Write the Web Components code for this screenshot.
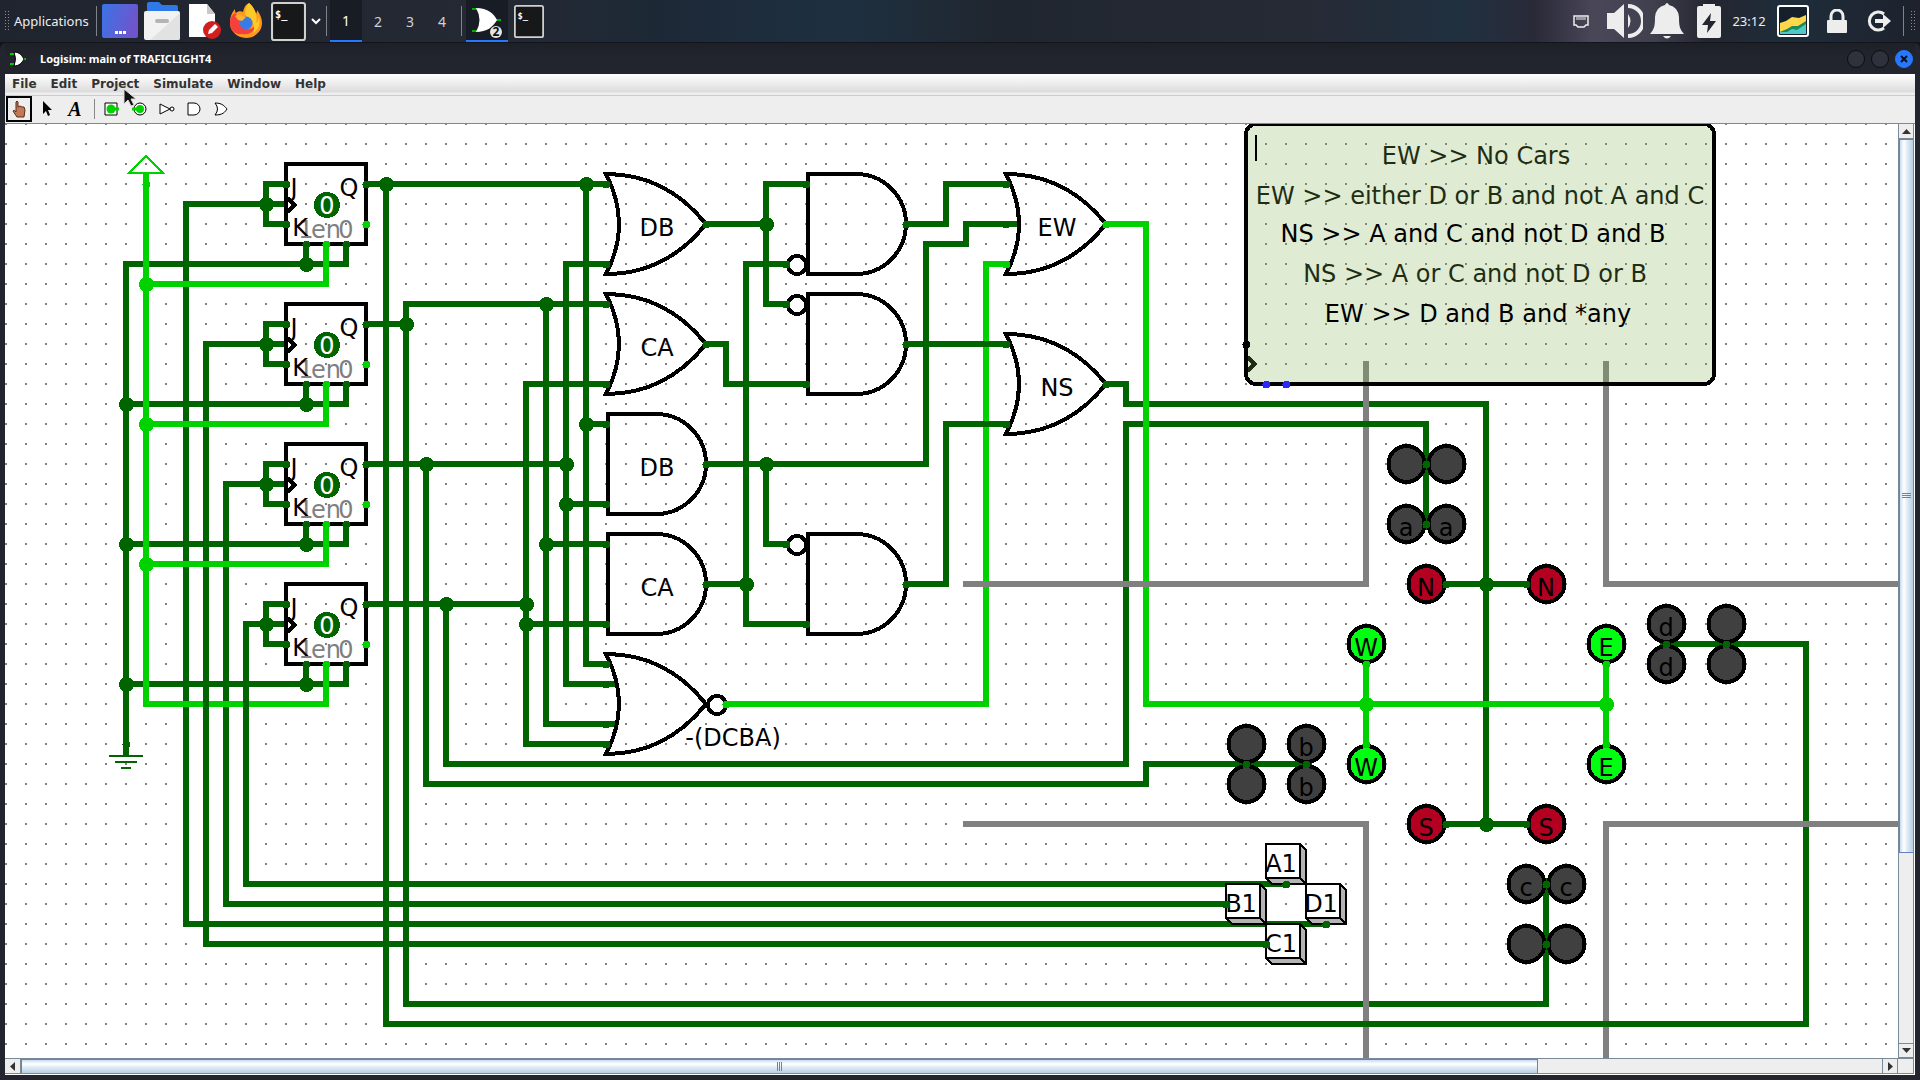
<!DOCTYPE html>
<html lang="en">
<head>
<meta charset="utf-8">
<title>Logisim: main of TRAFICLIGHT4</title>
<style>
html,body{margin:0;height:100%;overflow:hidden;background:#12151d}
body{display:flex;flex-direction:column}
app-window{flex:1;min-height:0}
</style>
</head>
<body>
<desk-panel></desk-panel>
<app-window heading="Logisim: main of TRAFICLIGHT4">
  <menu-bar slot="menu"></menu-bar>
  <tool-bar slot="tools"></tool-bar>
  <scroll-view><circuit-canvas></circuit-canvas></scroll-view>
</app-window>
<mouse-pointer></mouse-pointer>

<script>
function define(name, html, setup) {
  const template = document.createElement('template');
  template.innerHTML = html;
  customElements.define(name, class extends HTMLElement {
    constructor() {
      super();
      this.attachShadow({mode: 'open'}).appendChild(template.content.cloneNode(true));
    }
    connectedCallback() { if (setup) setup(this, this.shadowRoot); }
  });
}

/* ---------- desktop panel ---------- */
const terminalIcon = (w, h) => `<svg width="${w}" height="${h}" viewBox="0 0 34 38" preserveAspectRatio="none"><rect x="1" y="1" width="32" height="36" rx="2" fill="#171819" stroke="#d0d0cc" stroke-width="2"/><text x="4" y="16" font-family="DejaVu Sans Mono" font-weight="bold" font-size="10" fill="#fff">$_</text></svg>`;

define('desk-panel', `
<style>
:host{display:flex;align-items:center;height:42px;flex:none;color:#eee;font:13px "Noto Sans","Open Sans",sans-serif;
 background:linear-gradient(90deg,#20242e 0,#252933 25%,#1d2836 34%,#1e3040 44%,#20262f 52%,#262a35 68%,#20303f 76%,#2a2a38 80%,#4a4758 83%,#41404f 86%,#23262f 89%,#1f2d3b 93%,#1d222c 100%)}
button{all:unset;box-sizing:border-box;display:flex;align-items:center;justify-content:center;height:42px}
svg{display:block}
.handle{width:6px;height:22px;margin:0 4px;background:radial-gradient(circle,#8b8e94 1px,transparent 1px) 0 0/3px 3px}
.sep{width:1px;height:30px;background:#80838a}
.app{width:82px;justify-content:flex-start}
.launch{width:42px}
.ws{width:32px;font-size:14px;color:#cfd2d6}
.active{background:#181c24;border-bottom:2px solid #2777ff;color:#fff}
.chev{width:14px}
.task{width:42px}
.grow{flex:1}
</style>
<div class="handle"></div>
<button class="app">Applications</button>
<div class="sep" style="margin-right:2px"></div>
<button class="launch" aria-label="Show desktop"><svg width="36" height="34"><defs><linearGradient id="d" x2="1" y2="0.3"><stop stop-color="#3a74e6"/><stop offset="1" stop-color="#6f55cc"/></linearGradient></defs><rect width="36" height="34" rx="2" fill="url(#d)"/><path d="M13 27h3v3h-3zM17 27h3v3h-3zM21 27h3v3h-3z" fill="#fff"/></svg></button>
<button class="launch" aria-label="Files"><svg width="36" height="40"><path d="M3 3q0-2 2-2h10l3 3h14q2 0 2 2v10H3z" fill="#2f78e8"/><rect y="10" width="36" height="29" rx="2" fill="#f2f2f2"/><path d="M36 12v25q0 2-2 2H6z" fill="#e2e2e2"/><rect x="11" y="18" width="14" height="4" rx="2" fill="#b4b4b4"/></svg></button>
<button class="launch" aria-label="Text editor"><svg width="34" height="42"><path d="M2 4h18l8 10v23H2z" fill="#fff"/><path d="M20 4l8 10h-8z" fill="#c9c9c9"/><circle cx="25" cy="30" r="9" fill="#d41e1e"/><path d="M21 34l1-4 6-6 3 3-6 6z" fill="#fff"/></svg></button>
<button class="launch" aria-label="Firefox"><svg width="34" height="36" viewBox="0 0 34 36"><path d="M20 0c6 5 6 9 7 11 1-2 1-3 1-4 3 4 5 8 5 13a16 15 0 0 1-32 0C1 15 2 11 6 6c0 2 0 3 1 4 2-2 5-2 7-1 1-5 3-8 6-9z" fill="#ff9a1f"/><path d="M1 20c0-5 2-8 5-10l4 4 4 0-3 4c-2 6 7 12 15 5-1 8-9 9-13 8C6 32 1 27 1 20z" fill="#f5403d"/><path d="M20 0c6 5 9 13 7 20 2-1 3-4 2-7 3 6 1 14-5 17 3-7-1-14-6-16-3-3-2-10 2-14z" fill="#ffc928"/><circle cx="17" cy="20" r="6.500" fill="#3a7bea"/><path d="M6 13c3-2 6-1 8 0l3 1-4 4-4-1z" fill="#ffb22a"/></svg></button>
<button class="launch" aria-label="Terminal">${terminalIcon(35, 39)}</button>
<button class="chev" aria-label="More"><svg width="10" height="8"><path d="M1 2l4 4 4-4" fill="none" stroke="#fff" stroke-width="2"/></svg></button>
<div class="sep" style="margin:0 3px"></div>
<button class="ws active">1</button><button class="ws">2</button><button class="ws">3</button><button class="ws">4</button>
<div class="sep" style="margin:0 4px 0 3px"></div>
<button class="task active" aria-label="Logisim"><svg width="32" height="38"><path d="M1 8h5M1 30h5M25 19h5" stroke="#0a0" stroke-width="2"/><path d="M5 7c12 0 18 6 21 12-4 7-10 12-21 12q7-12 0-24z" fill="#fff"/><circle cx="25" cy="31" r="6" fill="#e6e6e0"/><text x="25" y="35" text-anchor="middle" font-family="Noto Sans" font-size="12" font-weight="bold" fill="#111">2</text></svg></button>
<button class="task" aria-label="Terminal task">${terminalIcon(30, 33)}</button>
<div class="grow"></div>
<button style="width:44px" aria-label="Network"><svg width="16" height="14"><path d="M1 2h14v9h-2l-2 2H5l-2-2H1z" fill="none" stroke="#eee" stroke-width="1.500"/><path d="M4 3v3M6 3v3M8 3v3M10 3v3M12 3v3" stroke="#eee"/></svg></button>
<button style="width:44px" aria-label="Volume"><svg width="36" height="34"><path d="M0 9h7L17 0v34L7 25H0z" fill="#ededed"/><path d="M21 10q5 7 0 14z" fill="#ededed"/><path d="M21 2a15 15 0 0 1 0 30" fill="none" stroke="#ededed" stroke-width="4"/></svg></button>
<button style="width:40px" aria-label="Notifications"><svg width="34" height="36"><path d="M15 2q2-4 4 0 9 2 10 12c0 10 1 12 5 17H0c4-5 5-7 5-17Q6 4 15 2zM13 33h8q-4 5-8 0z" fill="#ededed"/></svg></button>
<button style="width:44px" aria-label="Power"><svg width="24" height="34"><path d="M6 0h12v2h4q2 0 2 2v28q0 2-2 2H2q-2 0-2-2V4q0-2 2-2h4z" fill="#ededed"/><path d="M14 9L5 21h6l-1 8 9-12h-6z" fill="#23262f"/></svg></button>
<button style="width:36px;white-space:nowrap">23:12</button>
<button style="width:52px" aria-label="System load"><svg width="32" height="32"><rect x="1" y="1" width="30" height="30" rx="2" fill="#15202c" stroke="#fff" stroke-width="2"/><path d="M3 18l6-2 6-4 7 1 7-3v8l-9 4-7 2-10 4z" fill="#ffd74a"/><path d="M3 27l7-2 5-3 5 1 9-6v12H3z" fill="#4cc9c9"/><path d="M3 27l7-3 5-3 6 0 8-5v3l-9 6-5-1-5 3z" fill="#1e8a5a"/></svg></button>
<button style="width:36px" aria-label="Lock"><svg width="22" height="24"><path d="M5 11V7a6 6 0 0 1 12 0v4" fill="none" stroke="#ededed" stroke-width="3"/><rect x="1" y="11" width="20" height="13" rx="1" fill="#ededed"/></svg></button>
<button style="width:48px" aria-label="Log out"><svg width="24" height="22"><path d="M17 4a9 9 0 1 0 0 14" fill="none" stroke="#ededed" stroke-width="3"/><path d="M8 9h8V4l8 7-8 7v-5H8z" fill="#ededed"/></svg></button>
<div class="sep"></div>
<div class="handle" style="margin:0 4px 0 6px"></div>
`);

/* ---------- window frame ---------- */
define('app-window', `
<style>
:host{display:flex;flex-direction:column;box-sizing:border-box;margin-top:1px;padding:0 5px 5px;background:#23252e;border-radius:6px 6px 0 0}
header{display:flex;align-items:center;gap:6px;height:31px;flex:none;padding:0 2px 0 5px;background:linear-gradient(#1e2028,#23252e 50%);color:#fff}
h1{flex:1;margin:0 0 0 8px;font:bold 11px "Noto Sans","Open Sans",sans-serif}
header button{all:unset;box-sizing:border-box;width:18px;height:18px;border-radius:50%;background:#2f323d;border:1px solid #0c0d11}
header button.close{background:#2777ff;border-color:#2777ff;display:flex;align-items:center;justify-content:center}
main{flex:1;min-height:0;display:flex;flex-direction:column;background:#fff}
::slotted(scroll-view){flex:1;min-height:0}
</style>
<header>
<svg width="16" height="16"><path d="M0 3h4M0 13h4M13 8h3" stroke="#0c0" stroke-width="2"/><path d="M4 1c6 0 8 4 10 7-2 4-5 7-10 7q3-7 0-14z" fill="#fff" stroke="#000"/></svg>
<h1></h1>
<button aria-label="Minimize"></button><button aria-label="Maximize"></button><button class="close" aria-label="Close"><svg width="8" height="8"><path d="M1 1l6 6M7 1l-6 6" stroke="#0b0f1a" stroke-width="2"/></svg></button>
</header>
<main><slot name="menu"></slot><slot name="tools"></slot><slot></slot></main>
`, (el, root) => { root.querySelector('h1').textContent = el.getAttribute('heading'); });

define('menu-bar', `
<style>
:host{display:flex;height:20px;flex:none;padding-bottom:1px;background:linear-gradient(#fff,#dcdcdc 18px,#eee 19px);border-bottom:1px solid #ccc;font:bold 12px "DejaVu Sans",sans-serif}
button{all:unset;padding:0 7px;line-height:19px;color:#333}
button:first-child{padding:0 6px 0 4px}
</style>
<button>File</button><button>Edit</button><button>Project</button><button>Simulate</button><button>Window</button><button>Help</button>
`);

define('tool-bar', `
<style>
:host{display:flex;align-items:center;height:26px;flex:none;background:#eee;padding:0 1px 1px;border-bottom:1px solid #7a8a99}
button{all:unset;box-sizing:border-box;width:28px;height:26px;display:flex;align-items:center;justify-content:center}
.on{width:26px;margin-right:1px;border:2px solid #000}
i{width:1px;height:20px;background:#888;margin:0 2px 0 5px}
</style>
<button class="on" aria-label="Poke"><svg width="14" height="18" viewBox="0 0 14 18"><path d="M4 10V2q1-2 2 0v5l2-1 2 1 2 0 1 3-1 7H5L1 11q1-2 3 1z" fill="#c07a58" stroke="#5a2b17"/></svg></button>
<button aria-label="Select"><svg width="10" height="16"><path d="M1 0v13l3-3 2 5 2-1-2-5h4z"/></svg></button>
<button aria-label="Text" style="font:italic bold 20px/26px 'Liberation Serif',serif">A</button>
<i></i>
<button aria-label="Input pin"><svg width="16" height="14"><path d="M2 1h12v12h-12z" fill="#fff" stroke="#000"/><circle cx="8" cy="7" r="4.500" fill="#00d200"/><path d="M12 7h4" stroke="#00d200" stroke-width="3"/></svg></button>
<button aria-label="Output pin"><svg width="16" height="14"><circle cx="9" cy="7" r="6" fill="#fff" stroke="#000"/><circle cx="9" cy="7" r="4" fill="#00d200"/><path d="M1 7h5" stroke="#00d200" stroke-width="3"/></svg></button>
<button aria-label="NOT gate"><svg width="16" height="14"><path d="M1 2v10l10-5z" fill="#fff" stroke="#000"/><circle cx="13" cy="7" r="2" fill="#fff" stroke="#000"/></svg></button>
<button aria-label="AND gate" style="width:26px"><svg width="14" height="14"><path d="M1 1h6a6 6 0 0 1 0 12H1z" fill="#fff" stroke="#000"/></svg></button>
<button aria-label="OR gate"><svg width="16" height="14"><path d="M2 1c8 0 10 4 12 6-2 3-4 6-12 6q5-6 0-12z" fill="#fff" stroke="#000"/></svg></button>
`);

/* ---------- scrolling area ---------- */
define('scroll-view', `
<style>
:host{display:grid;grid-template:minmax(0,1fr) 16px / minmax(0,1fr) 16px;margin:0 1px 1px 0;background:#eee}
::slotted(*){min-width:0;min-height:0}
.v,.h{display:flex;background:#eee;box-sizing:border-box}
.v{flex-direction:column;border:1px solid #7a8a99;border-width:0 1px}
.h{border:1px solid #7a8a99;border-width:1px 0}
button{all:unset;box-sizing:border-box;flex:none;display:flex;align-items:center;justify-content:center;background:#eee}
.v button{height:15px;border-bottom:1px solid #7a8a99}.h button{width:16px;border-right:1px solid #7a8a99}
.v button:last-child{border:solid #7a8a99;border-width:1px 0}
.h button:last-child{border:solid #7a8a99;border-width:0 1px}
.thumb{box-sizing:border-box;display:flex;align-items:center;justify-content:center}
.v .thumb{flex:713;border:solid #6382bf;border-width:1px 0 1px 1px;background:linear-gradient(90deg,#c8ddf2,#fff 30%,#dce8f3 60%,#b8cfe5)}
.h .thumb{flex:1517;border:solid #6382bf;border-width:1px 1px 0;background:linear-gradient(#c8ddf2,#fff 30%,#dce8f3 60%,#b8cfe5)}
.v s{flex:190}.h s{flex:344}
.corner{border:solid #7a8a99;border-width:1px 1px 1px 0}
</style>
<slot></slot>
<div class="v"><button aria-label="Up"><svg width="9" height="5"><path d="M0 5L4.500 0 9 5z" fill="#333"/></svg></button><div class="thumb"><svg width="9" height="6" shape-rendering="crispEdges"><path d="M0 .5h9M0 2.500h9M0 4.500h9" stroke="#6382bf"/></svg></div><s></s><button aria-label="Down"><svg width="9" height="5"><path d="M0 0l4.500 5L9 0z" fill="#333"/></svg></button></div>
<div class="h"><button aria-label="Left"><svg width="5" height="9"><path d="M5 0L0 4.500 5 9z" fill="#333"/></svg></button><div class="thumb"><svg width="6" height="9" shape-rendering="crispEdges"><path d="M.5 0v9M2.500 0v9M4.500 0v9" stroke="#6382bf"/></svg></div><s></s><button aria-label="Right"><svg width="5" height="9"><path d="M0 0l5 4.500L0 9z" fill="#333"/></svg></button></div>
<div class="corner"></div>
`);

/* ---------- circuit ---------- */
const G = 20, DARK = '#006400', LIT = '#00d200';
const wires = (color, list) => list.map(p => {
  const pts = p.map(v => v * G);
  let d = '';
  for (let i = 0; i < pts.length; i += 2) d += (i ? 'L' : 'M') + pts[i] + ' ' + pts[i + 1];
  return `<path d="${d}" fill="none" stroke="${color}" stroke-width="6"/>`;
}).join('');
const dots = (color, r, list) => list.map(([x, y]) => `<circle cx="${x * G + .5}" cy="${y * G + .5}" r="${r}" fill="${color}"/>`).join('');
const label = (x, y, t, extra = '') => t ? `<text x="${x}" y="${y}" text-anchor="middle" ${extra}>${t}</text>` : '';

const andGate = (X, Y, t) => { const x = X * G, y = Y * G;
  return `<path class="s" d="M${x - 50} ${y - 50}H${x - 98}V${y + 50}H${x - 50}A50 50 0 0 0 ${x - 50} ${y - 50}"/>` + label(x - 49, y + 12, t); };
const orGate = (X, Y, t) => { const x = X * G, y = Y * G;
  return `<path class="s" d="M${x} ${y}q-40 -50 -100 -50q26 50 0 100q60 0 100 -50z"/>` + label(x - 49, y + 12, t); };
const bubble = (X, Y) => `<circle class="s" cx="${X * G + 11}" cy="${Y * G + 1}" r="9"/>`;

function flipFlop(Y, clockX) {
  const y = Y * G;
  return wires(DARK, [[14, Y + 1, 13, Y + 1, 13, Y + 3, 14, Y + 3], [clockX, Y + 2, 14, Y + 2], [15, Y + 4, 15, Y + 5], [17, Y + 4, 17, Y + 5, 6, Y + 5]])
    + dots(DARK, 7.5, [[13, Y + 2], [15, Y + 5]])
    + `<rect class="s" x="280" y="${y}" width="80" height="80"/><path class="s" d="M280 ${y + 33}l9 8-9 8"/>`
    + label(288, y + 32, 'J') + label(343, y + 32, 'Q')
    + label(300, y + 74, '1', 'fill="#808080"') + label(320, y + 74, 'en', 'fill="#808080"') + label(340, y + 74, '0', 'fill="#808080"')
    + label(294, y + 72, 'K')
    + `<circle cx="321" cy="${y + 41}" r="13" fill="${DARK}"/>` + label(321, y + 50, '0', 'fill="#fff"')
    + dots(DARK, 4, [[14, Y + 1], [14, Y + 3], [18, Y + 1], [15, Y + 4], [17, Y + 4]]) + dots(LIT, 4, [[18, Y + 3], [16, Y + 4]]);
}
const led = (X, Y, fill, t) => `<circle cx="${X * G + .5}" cy="${Y * G}" r="18" fill="${fill}" stroke="#000" stroke-width="4"/>` + label(X * G, Y * G + 12, t);
const key = (X, Y, t) => { const x = X * G, y = Y * G;
  return `<path d="M${x} ${y}h34l6 6v34h-34l-6-6z" fill="#b4b4b4" stroke="#000" stroke-width="2"/><path d="M${x} ${y}h34v34h-34z" fill="#fff" stroke="#000" stroke-width="2"/><path d="M${x + 34} ${y + 34}l6 6" stroke="#000" stroke-width="2"/>` + label(x + 15, y + 28, t); };

const ffs = [[2, 9], [9, 10], [16, 11], [23, 12]];
const circuit = [
  wires(DARK, [
    [9, 3.85, 9, 40, 66, 40], [10, 10.85, 10, 41, 63, 41], [11, 17.85, 11, 39, 61, 39], [12, 24.85, 12, 38, 64, 38],
    [6, 6.85, 6, 31.6],
    [18, 3, 30.25, 3], [19, 3, 19, 45, 90, 45, 90, 26, 82.7, 26],
    [18, 10, 20, 10], [30.25, 9, 20, 9, 20, 44, 77, 44, 77, 37.7],
    [18, 17, 28, 17], [21, 17, 21, 33, 57, 33, 57, 32, 65.3, 32],
    [18, 24, 26, 24], [22, 24, 22, 32, 56, 32, 56, 15, 71, 15, 71, 20.3],
    [29, 3, 29, 27, 30.25, 27], [29, 15, 30, 15],
    [30.25, 7, 28, 7, 28, 28, 30.6, 28], [28, 19, 30, 19],
    [27, 9, 27, 30, 30.6, 30], [27, 21, 30, 21],
    [30.25, 13, 26, 13, 26, 31, 30.25, 31], [26, 25, 30, 25],
    [35, 5, 38, 5], [40, 3, 38, 3, 38, 9, 39, 9],
    [35, 11, 36, 11, 36, 13, 40, 13],
    [35, 17, 46, 17, 46, 6, 48, 6, 48, 5, 50.6, 5], [38, 17, 38, 21, 39, 21],
    [35, 23, 37, 23], [39, 7, 37, 7, 37, 25, 40, 25],
    [45, 5, 47, 5, 47, 3, 50.25, 3], [45, 23, 47, 23, 47, 15],
    [55, 13, 56, 13, 56, 14, 74, 14, 74, 35], [72, 23, 76, 23], [72, 35, 76, 35]]),
  ffs.map(f => flipFlop(...f)).join(''),
  wires(LIT, [[7, 2.4, 7, 29, 16, 29, 16, 27], [7, 8, 16, 8, 16, 6], [7, 15, 16, 15, 16, 13], [7, 22, 16, 22, 16, 20],
    [36, 29, 49, 29, 49, 7, 50.25, 7], [55, 5, 57, 5, 57, 29, 80, 29], [68, 27, 68, 31], [80, 27, 80, 31]]),
  wires(DARK, [[10, 28.5, 10, 29.5], [12, 28.5, 12, 29.5], [45, 11, 50.25, 11], [46.85, 15, 50.25, 15]]),
  dots(DARK, 7.5, [[19, 3], [29, 3], [20, 10], [27, 9], [21, 17], [28, 17], [28, 19], [22, 24], [26, 24], [26, 25], [27, 21], [29, 15],
    [38, 5], [38, 17], [37, 23], [6, 14], [6, 21], [6, 28], [74, 23], [74, 35]]),
  dots(LIT, 7.5, [[7, 8], [7, 15], [7, 22], [68, 29], [80, 29]]),
  `<path d="M140 32l17 17h-34z" fill="none" stroke="${LIT}" stroke-width="2"/>`,
  `<path d="M103 632h34M109 638h22M115 644h10" stroke="${DARK}" stroke-width="2"/>`,
  dots(DARK, 4, [[6, 31]]), dots(LIT, 4, [[7, 3]]),
  orGate(35, 5, 'DB'), orGate(35, 11, 'CA'), andGate(35, 17, 'DB'), andGate(35, 23, 'CA'), orGate(35, 29), bubble(35, 29),
  andGate(45, 5), andGate(45, 11), andGate(45, 23), bubble(39, 7), bubble(39, 9), bubble(39, 21),
  orGate(55, 5, 'EW'), orGate(55, 13, 'NS'), label(727, 622, '-(DCBA)'),
  dots(DARK, 4, [[30, 3], [30, 7], [30, 9], [30, 13], [30, 15], [30, 19], [30, 21], [30, 25], [30, 27], [30, 28], [30, 30], [30, 31],
    [35, 5], [35, 11], [35, 17], [35, 23], [39, 7], [39, 9], [39, 21], [40, 3], [40, 13], [40, 25], [45, 5], [45, 11], [45, 23],
    [50, 3], [50, 5], [50, 11], [50, 15], [55, 13]]),
  dots(LIT, 4, [[36, 29], [50, 7], [55, 5]]),
  // roads
  `<path d="M957 460H1360V237M957 700H1360V2000M1600 237V460H3000M1600 2000V700H3000" fill="none" stroke="#808080" stroke-width="6"/>`,
  wires(DARK, [[67.5, 15, 68.5, 15], [67.5, 45, 68.5, 45], [79.5, 45, 80.5, 45]]),
  // lamps
  ...[[70, 17], [72, 17], [62, 31], [62, 33], [86, 25], [86, 27], [76, 41], [78, 41]].map(p => led(...p, '#404040')),
  ...[[70, 20, 'a'], [72, 20, 'a'], [65, 31, 'b'], [65, 33, 'b'], [83, 25, 'd'], [83, 27, 'd'], [76, 38, 'c'], [78, 38, 'c']].map(([x, y, t]) => led(x, y, '#404040', t)),
  ...[[71, 23, 'N'], [77, 23, 'N'], [71, 35, 'S'], [77, 35, 'S']].map(([x, y, t]) => led(x, y, '#b40020', t)),
  ...[[68, 26, 'W'], [68, 32, 'W'], [80, 26, 'E'], [80, 32, 'E']].map(([x, y, t]) => led(x, y, '#00ff10', t)),
  dots(DARK, 4, [[71, 17], [71, 20], [62, 32], [65, 32], [83, 26], [86, 26], [77, 38], [77, 41], [72, 23], [76, 23], [72, 35], [76, 35]]),
  dots(LIT, 4, [[68, 27], [68, 31], [80, 27], [80, 31]]),
  // push buttons
  key(63, 36, 'A1'), key(61, 38, 'B1'), key(65, 38, 'D1'), key(63, 40, 'C1'),
  dots(DARK, 4, [[64, 38], [66, 40], [61, 39], [63, 41]]),
  // note display
  label(1470, 40, 'EW &gt;&gt; No Cars'), label(1474, 80, 'EW &gt;&gt; either D or B and not A and C'), label(1469, 158, 'NS &gt;&gt; A or C and not D or B'),
  `<path class="s" d="M1240 232l9 8-9 8"/><rect x="1240" y="0" width="468" height="260" rx="10" fill="rgba(127,174,80,.25)" stroke="#000" stroke-width="4"/><path d="M1250 11v26" stroke="#000" stroke-width="2"/>`,
  label(1467, 118, 'NS &gt;&gt; A and C and not D and B'), label(1472, 198, 'EW &gt;&gt; D and B and *any'),
  dots('#000', 4, [[62, 11]]), dots('#2828ff', 4, [[63, 13], [64, 13]])
].join('');

define('circuit-canvas', `
<style>
:host{display:block;overflow:hidden;box-sizing:border-box;background:#fff}
svg{display:block;width:100%;height:100%;font:24px "DejaVu Sans",sans-serif;shape-rendering:crispEdges}
.s{fill:none;stroke:#000;stroke-width:4}
</style>
<svg role="img" aria-label="Traffic light circuit">
<defs><pattern id="grid" x="-1" y="-1" width="20" height="20" patternUnits="userSpaceOnUse"><rect width="2" height="2" fill="#808080"/></pattern></defs>
<g transform="translate(1 0)"><rect x="-1" y="0" width="100%" height="100%" fill="url(#grid)"/>${circuit}</g>
</svg>
`);

define('mouse-pointer', `
<style>:host{display:block;position:absolute;left:123px;top:88px;pointer-events:none}svg{display:block}</style>
<svg width="14" height="20"><path d="M1 1v15l4-4 3 6 3-1-3-6h5z" fill="#111" stroke="#ddd"/></svg>
`);
</script>
</body>
</html>
